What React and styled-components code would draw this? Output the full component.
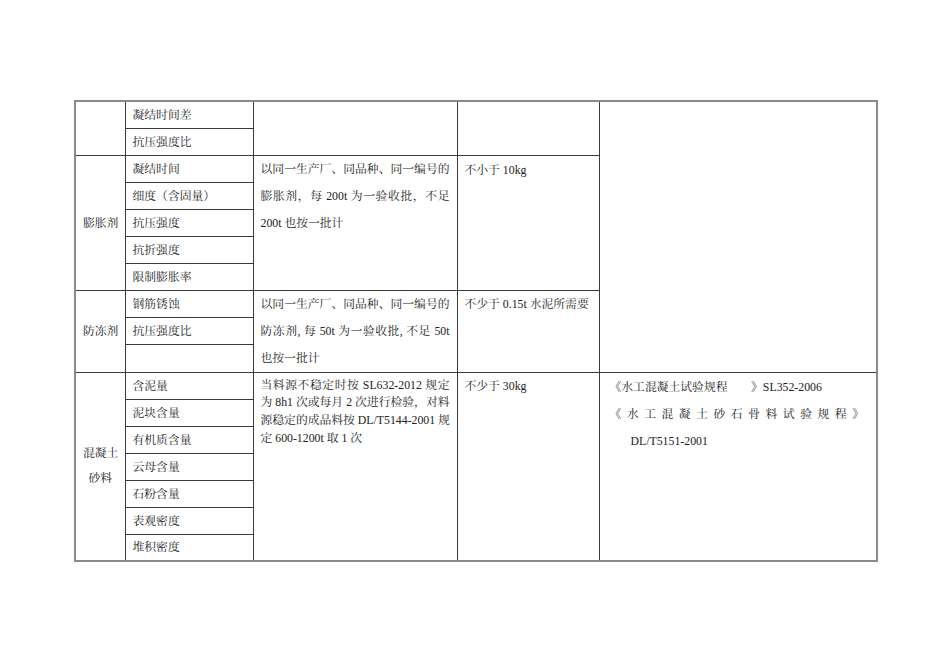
import React from "react";
import styled, { createGlobalStyle } from "styled-components";

const GlobalStyle = createGlobalStyle`
  html, body {
    margin: 0;
    padding: 0;
    background: #fff;
  }
  body {
    font-family: "Liberation Serif", "Noto Serif CJK SC", "Noto Sans CJK SC", serif;
    color: #222;
  }
`;

const Page = styled.div`
  width: 950px;
  height: 672px;
  box-sizing: border-box;
  padding: 100px 0 0 74px;
`;

const Table = styled.table`
  border-collapse: collapse;
  table-layout: fixed;
  width: 802px;
  border: 2px solid #8a8a8a;
  font-size: 11.8px;
`;

const Row = styled.tr`
  height: 27px;
`;

const Cell = styled.td`
  border: 1px solid #3a3a3a;
  padding: 0 7px;
  vertical-align: ${(p) => p.$valign || "middle"};
  text-align: ${(p) => (p.$center ? "center" : "left")};
  line-height: ${(p) => p.$lh || "18px"};
  padding-top: ${(p) => p.$pt || "0"};
  white-space: nowrap;
  overflow: hidden;
`;

const Line = styled.div`
  text-align: ${(p) => (p.$justify ? "justify" : "left")};
  text-align-last: ${(p) => (p.$justify ? "justify" : "left")};
  padding-left: ${(p) => p.$indent || "0"};
  white-space: nowrap;
`;

const RefCell = styled(Cell)`
  padding-left: 10px;
  padding-right: 12px;
`;

export default function App() {
  return (
    <>
      <GlobalStyle />
      <Page>
        <Table>
          <colgroup>
            <col style={{ width: 50 }} />
            <col style={{ width: 128 }} />
            <col style={{ width: 204 }} />
            <col style={{ width: 142 }} />
            <col style={{ width: 278 }} />
          </colgroup>
          <tbody>
            <Row>
              <Cell rowSpan={2} />
              <Cell>凝结时间差</Cell>
              <Cell rowSpan={2} />
              <Cell rowSpan={2} />
              <Cell rowSpan={10} />
            </Row>
            <Row>
              <Cell>抗压强度比</Cell>
            </Row>

            <Row>
              <Cell rowSpan={5} $center>膨胀剂</Cell>
              <Cell>凝结时间</Cell>
              <Cell rowSpan={5} $valign="top" $lh="27px">
                <Line $justify>以同一生产厂、同品种、同一编号的</Line>
                <Line $justify>膨胀剂，每 200t 为一验收批，不足</Line>
                <Line>200t 也按一批计</Line>
              </Cell>
              <Cell rowSpan={5} $valign="top" $lh="27px" $pt="1px">不小于 10kg</Cell>
            </Row>
            <Row>
              <Cell>细度（含固量）</Cell>
            </Row>
            <Row>
              <Cell>抗压强度</Cell>
            </Row>
            <Row>
              <Cell>抗折强度</Cell>
            </Row>
            <Row>
              <Cell>限制膨胀率</Cell>
            </Row>

            <Row>
              <Cell rowSpan={3} $center>防冻剂</Cell>
              <Cell>钢筋锈蚀</Cell>
              <Cell rowSpan={3} $valign="top" $lh="27px">
                <Line $justify>以同一生产厂、同品种、同一编号的</Line>
                <Line $justify>防冻剂, 每 50t 为一验收批, 不足 50t</Line>
                <Line>也按一批计</Line>
              </Cell>
              <Cell rowSpan={3} $valign="top" $lh="27px">不少于 0.15t 水泥所需要</Cell>
            </Row>
            <Row>
              <Cell>抗压强度比</Cell>
            </Row>
            <Row>
              <Cell />
            </Row>

            <Row>
              <Cell rowSpan={7} $center $lh="25px">
                混凝土
                <br />
                砂料
              </Cell>
              <Cell>含泥量</Cell>
              <Cell rowSpan={7} $valign="top" $lh="17.7px" $pt="4px">
                <Line $justify>当料源不稳定时按 SL632-2012 规定</Line>
                <Line $justify>为 8h1 次或每月 2 次进行检验，对料</Line>
                <Line $justify>源稳定的成品料按 DL/T5144-2001 规</Line>
                <Line>定 600-1200t 取 1 次</Line>
              </Cell>
              <Cell rowSpan={7} $valign="top" $lh="27px">不少于 30kg</Cell>
              <RefCell rowSpan={7} $valign="top" $lh="27px" $pt="1px">
                <Line>《水工混凝土试验规程　　》SL352-2006</Line>
                <Line $justify>《水工混凝土砂石骨料试验规程》</Line>
                <Line $indent="21px">DL/T5151-2001</Line>
              </RefCell>
            </Row>
            <Row>
              <Cell>泥块含量</Cell>
            </Row>
            <Row>
              <Cell>有机质含量</Cell>
            </Row>
            <Row>
              <Cell>云母含量</Cell>
            </Row>
            <Row>
              <Cell>石粉含量</Cell>
            </Row>
            <Row>
              <Cell>表观密度</Cell>
            </Row>
            <Row>
              <Cell>堆积密度</Cell>
            </Row>
          </tbody>
        </Table>
      </Page>
    </>
  );
}
